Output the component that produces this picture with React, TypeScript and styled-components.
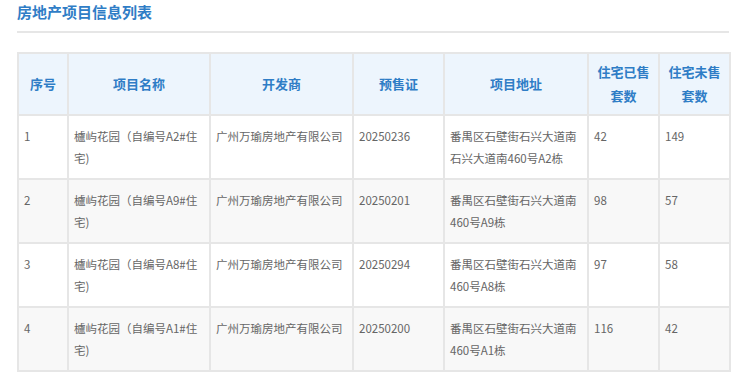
import { createGlobalStyle } from 'styled-components'
import styled from 'styled-components'
import type { ReactElement } from 'react'

type RowType = {
  no: string
  name: string
  developer: string
  permit: string
  address: string
  sold: string
  unsold: string
}

const rows: RowType[] = [
  { no: '1', name: '櫨屿花园（自编号A2#住宅)', developer: '广州万瑜房地产有限公司', permit: '20250236', address: '番禺区石壁街石兴大道南石兴大道南460号A2栋', sold: '42', unsold: '149' },
  { no: '2', name: '櫨屿花园（自编号A9#住宅)', developer: '广州万瑜房地产有限公司', permit: '20250201', address: '番禺区石壁街石兴大道南460号A9栋', sold: '98', unsold: '57' },
  { no: '3', name: '櫨屿花园（自编号A8#住宅)', developer: '广州万瑜房地产有限公司', permit: '20250294', address: '番禺区石壁街石兴大道南460号A8栋', sold: '97', unsold: '58' },
  { no: '4', name: '櫨屿花园（自编号A1#住宅)', developer: '广州万瑜房地产有限公司', permit: '20250200', address: '番禺区石壁街石兴大道南460号A1栋', sold: '116', unsold: '42' },
]

const columns = [
  { title: '序号', width: 50 },
  { title: '项目名称', width: 142 },
  { title: '开发商', width: 143 },
  { title: '预售证', width: 91 },
  { title: '项目地址', width: 144 },
  { title: '住宅已售套数', width: 71 },
  { title: '住宅未售套数', width: 71 },
]

const App = (): ReactElement => {
  return (
    <>
      <GlobalStyle />
      <Page>
        <Title>房地产项目信息列表</Title>
        <Divider />
        <Table>
          <colgroup>
            {columns.map(col => (
              <col key={col.title} style={{ width: col.width }} />
            ))}
          </colgroup>
          <thead>
            <tr>
              {columns.map(col => (
                <HeadCell key={col.title}>{col.title}</HeadCell>
              ))}
            </tr>
          </thead>
          <tbody>
            {rows.map((row, i) => (
              <Row key={row.no} $striped={i % 2 === 1}>
                <Cell>{row.no}</Cell>
                <Cell>{row.name}</Cell>
                <Cell>{row.developer}</Cell>
                <Cell>{row.permit}</Cell>
                <Cell>{row.address}</Cell>
                <Cell>{row.sold}</Cell>
                <Cell>{row.unsold}</Cell>
              </Row>
            ))}
          </tbody>
        </Table>
      </Page>
    </>
  )
}

export default App

const GlobalStyle = createGlobalStyle`
  body {
    margin: 0;
    background: #ffffff;
    font-family: "Noto Sans CJK SC", "Noto Sans", sans-serif;
  }
`

const Page = styled.div`
  width: 712px;
  padding: 0 0 0 17px;
`

const Title = styled.h2`
  margin: 0;
  font-size: 15px;
  line-height: 24px;
  font-weight: 700;
  color: #2f7dc6;
`

const Divider = styled.div`
  height: 2px;
  margin-top: 7px;
  background: #e6e6e6;
`

const Table = styled.table`
  margin-top: 19px;
  width: 712px;
  table-layout: fixed;
  border-collapse: collapse;
  border: 2px solid #e6e6e6;
`

const HeadCell = styled.th`
  height: 60px;
  padding: 0 8px;
  background: #edf5fd;
  border: 2px solid #e6e6e6;
  color: #2f7dc6;
  font-size: 13px;
  font-weight: 700;
  line-height: 24px;
  text-align: center;
  vertical-align: middle;
`

const Row = styled.tr<{ $striped: boolean }>`
  background: ${props => (props.$striped ? '#f8f8f8' : '#ffffff')};
`

const Cell = styled.td`
  height: 44px;
  padding: 9px 5px;
  border: 2px solid #e6e6e6;
  color: #666666;
  font-size: 11.5px;
  line-height: 22px;
  vertical-align: top;
  word-break: break-all;
`
